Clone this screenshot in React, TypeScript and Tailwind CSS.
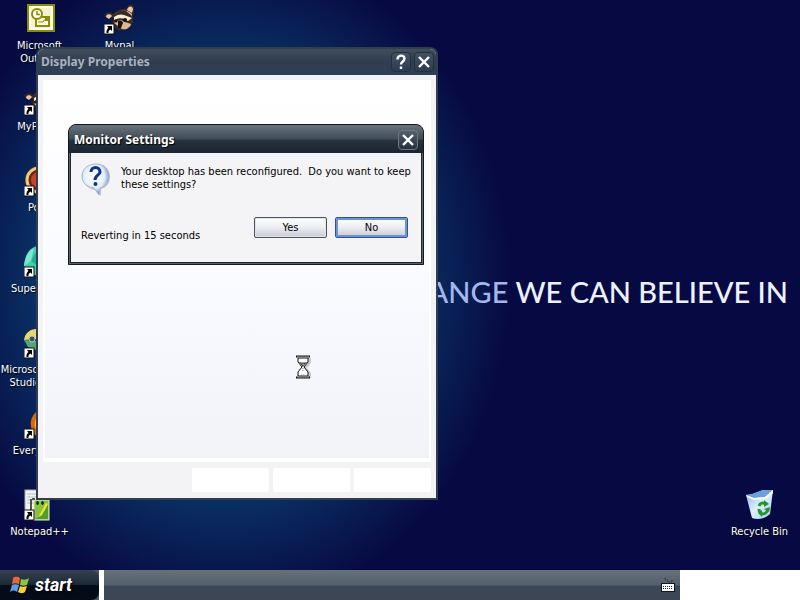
import type { ReactNode } from 'react';

function Shortcut() {
  return (
    <g>
      <rect x="0" y="21" width="10" height="10" fill="#fff" stroke="#111" strokeWidth="1" />
      <path d="M3 23h5v5l-1.600-1.600c-1.500 1-2 2-2 3.600H2.500c-.3-2.400.6-4 2-5z" fill="#000" />
    </g>
  );
}

function Icon({ children }: { children: ReactNode }) {
  return (
    <svg viewBox="0 0 32 32" className="h-8 w-8 shrink-0" aria-hidden="true">
      {children}
    </svg>
  );
}

const outlook = (
  <Icon>
    <rect x="3" y="1" width="28" height="28" fill="#8b8d08" />
    <rect x="5" y="3" width="24" height="24" fill="#fffff0" />
    <rect x="7" y="5" width="20" height="20" fill="#f4f3cf" />
    <rect x="12" y="14" width="13" height="9" fill="#fffff0" stroke="#8b8d08" strokeWidth="2" />
    <path d="M14 19h5l1-2h5" fill="none" stroke="#8b8d08" />
    <circle cx="13" cy="11" r="5" fill="#fffff0" stroke="#8b8d08" strokeWidth="2" />
    <path d="M13 8v3.500h3" fill="none" stroke="#8b8d08" strokeWidth="1.500" />
    <rect x="21" y="15" width="3" height="3" fill="#8b8d08" />
  </Icon>
);

const raccoon = (
  <Icon>
    <path d="M1 14c-1-4 4-6 8-3 4-4 8-5 13-5l3-4c3-1 6 1 5 6l-1 5c1 6-1 10-4 12-4 3-8 3-11 2l-5-4c-1-3-1-5 1-8z" fill="#3b2a22" />
    <path d="M2 14c0-3 4-4 6-1l-3 3zM23 7c1-4 5-5 6-1l-1 4z" fill="#e9c8a8" />
    <path d="M10 12c4-4 8-5 12-4l6 5c0-1 0-2-1-3-5-4-12-3-17 2z" fill="#c9b39c" />
    <path d="M10 14c4-3 7-3 10-2l8 3-4 3c-4-3-8-4-14-1z" fill="#f7ead9" />
    <path d="M10 20c3-3 7-4 11-1l6 2c-1 4-5 6-9 5l-4-3z" fill="#dcb796" />
    <path d="M14 18c2-1 5 0 5 2l-2 5h-3z" fill="#1b1210" />
    <circle cx="21" cy="17" r="2" fill="#120d0c" />
    <circle cx="12" cy="18" r="1.500" fill="#120d0c" />
    <Shortcut />
  </Icon>
);

const disc = (
  <Icon>
    <circle cx="15" cy="15" r="14" fill="#6b2412" />
    <circle cx="15" cy="15" r="12" fill="none" stroke="#e6cd86" strokeWidth="3" />
    <circle cx="15" cy="15" r="8" fill="#c8402a" />
    <Shortcut />
  </Icon>
);

const gem = (
  <Icon>
    <path d="M0 20C1 8 6 1 14 0c8 2 14 9 14 20l-8 9H8z" fill="#3fcfae" />
    <path d="M0 20C1 10 5 4 10 2L7 15z" fill="#7fe6cc" />
    <path d="M7 15l7-13v18z" fill="#23ae94" />
    <Shortcut />
  </Icon>
);

const studio = (
  <Icon>
    <path d="M0 13C1 6 6 2 12 2v10z" fill="#ecd76b" />
    <path d="M12 2c8 0 14 5 15 11l-13 2z" fill="#d9502e" />
    <path d="M0 13l4 7 8 3 2-9z" fill="#55a577" />
    <path d="M14 14l13-1c0 7-6 11-13 11z" fill="#3a6fc0" />
    <circle cx="8" cy="12" r="3" fill="#31517e" stroke="#c7cf8c" strokeWidth="1" />
    <Shortcut />
  </Icon>
);

const flame = (
  <Icon>
    <path d="M14 2C6 9 5 16 9 25c4 5 12 4 15-1 3-8-4-13-10-22z" fill="#d4690f" />
    <path d="M13 9c-4 6-2 13 2 16 3-5 1-10-2-16z" fill="#ffb22e" />
    <Shortcut />
  </Icon>
);

const notepad = (
  <Icon>
    <rect x="1" y="1" width="19" height="26" fill="#f2f3f4" stroke="#a8adb5" />
    <path d="M3 5h15M3 8h15M3 11h15M3 14h15" stroke="#b4bcc6" />
    <rect x="10" y="11" width="15" height="20" fill="#86c440" stroke="#dceccc" />
    <path d="M11 30c6-2 10-8 13-15v15z" fill="#509f28" />
    <path d="M16 25l6-11 2 1-6 11-3 2z" fill="#f2de3b" />
    <path d="M7 10v12M8 10h3M12 14h3M13.500 12v4M17 14h3M18.500 12v4" stroke="#1d2a14" strokeWidth="1.500" />
    <Shortcut />
  </Icon>
);

const bin = (
  <Icon>
    <defs>
      <linearGradient id="bin" x1="0" x2="1" y1="0" y2="1">
        <stop offset="0" stopColor="#7fb5ec" />
        <stop offset=".5" stopColor="#dff0fb" />
        <stop offset="1" stopColor="#9cc9ef" />
      </linearGradient>
    </defs>
    <path d="M2 6l6-1 11-4 10 0-3 24c-5 5-13 6-18 4z" fill="url(#bin)" />
    <path d="M2 6l8 3 11-1 8-7-10 0-10 4z" fill="#6ba0dc" />
    <path d="M2 6l8 3 11-1 8-7v3l-8 6-11 1-7-3z" fill="#f8fcff" />
    <g fill="none" stroke="#25962c" strokeWidth="3">
      <path d="M15 17c1-3 4-4 7-2M24 20c-1 4-3 5-6 5M15 20c0 2 1 4 3 4" />
    </g>
    <path d="M20 11l5 4-5 3zM26 18l-1 5-5-3zM18 21v7l-4-4z" fill="#25962c" />
  </Icon>
);

function DesktopItem({ icon, lines }: { icon: ReactNode; lines: string[] }) {
  return (
    <button
      type="button"
      className="flex h-[81px] w-[79px] shrink-0 flex-col items-center gap-1 pt-[3px] text-center text-[11px] leading-[13px] text-white [text-shadow:1px_1px_1px_#000]"
    >
      {icon}
      <span>
        {lines.map((line) => (
          <span key={line} className="block whitespace-nowrap">
            {line}
          </span>
        ))}
      </span>
    </button>
  );
}

function TitleButton({ label, children, dim }: { label: string; children: ReactNode; dim?: boolean }) {
  return (
    <button
      type="button"
      aria-label={label}
      className={
        dim
          ? 'flex h-5 w-5 items-center justify-center rounded-sm border border-[#222f40] bg-gradient-to-b from-[#445162] to-[#2b3b50]'
          : 'flex h-5 w-5 items-center justify-center rounded-sm border border-[#6c7783] bg-gradient-to-b from-[#56616b] to-[#26323f]'
      }
    >
      <svg viewBox="0 0 16 16" className="h-4 w-4" fill="none" stroke="#fff" strokeWidth="2.400">
        {children}
      </svg>
    </button>
  );
}

const cross = <path d="M3 3l10 10M13 3L3 13" />;

function DisplayProperties() {
  return (
    <section
      aria-label="Display Properties"
      className="absolute top-[47px] left-9 flex h-[453px] w-[402px] flex-col rounded-t-lg border-2 border-[#2f3f50] bg-[#f3f3f6]"
    >
      <header className="flex h-[26px] shrink-0 items-center justify-between rounded-t-md bg-gradient-to-b from-[#424d5b] via-[#303d4f] to-[#2d3f57] pr-[2px] pl-[3px]">
        <h1 className="font-['Noto_Sans'] text-[12px] font-bold text-[#a9b1bd]">Display Properties</h1>
        <div className="flex gap-[3px]">
          <TitleButton label="Help" dim>
            <path d="M4.500 5.500c0-5 7-5 7-1 0 3-3.500 3-3.500 6M8 12.500v2.500" />
          </TitleButton>
          <TitleButton label="Close" dim>
            {cross}
          </TitleButton>
        </div>
      </header>
      <div className="flex grow flex-col px-[5px] pt-[5px]">
        <div className="grow border-2 border-b-4 border-white bg-gradient-to-b from-white via-[#fafbff] to-[#f2f3f9]" />
        <footer className="flex h-9 shrink-0 items-center justify-end gap-1">
          <button type="button" aria-label="OK" className="h-6 w-[77px] rounded-xs bg-white" />
          <button type="button" aria-label="Cancel" className="h-6 w-[77px] rounded-xs bg-white" />
          <button type="button" aria-label="Apply" className="h-6 w-[77px] rounded-xs bg-white" />
        </footer>
      </div>
    </section>
  );
}

function MonitorSettings() {
  return (
    <section
      role="dialog"
      aria-label="Monitor Settings"
      className="absolute top-[124px] left-[68px] flex h-[141px] w-[356px] flex-col rounded-t-lg border border-[#15191f] bg-[#59636d] text-[11px] leading-[13px] text-black"
    >
      <header className="flex h-7 shrink-0 items-center justify-between rounded-t-lg bg-linear-[to_bottom,#69727a_0%,#3f4c56_50%,#26323f_55%,#1b2533_100%] pt-px pr-[5px] pl-[5px]">
        <h2 className="font-['Noto_Sans'] text-[12px] font-bold text-white [text-shadow:1px_1px_1px_#000]">Monitor Settings</h2>
        <TitleButton label="Close">{cross}</TitleButton>
      </header>
      <div className="mx-px mb-px flex grow flex-col border border-t-0 border-[#20262d] bg-[#f4f4f6] pt-[9px] pr-3 pl-[10px]">
        <div className="flex gap-2">
          <svg viewBox="0 0 32 36" className="h-9 w-8 shrink-0" aria-hidden="true">
            <defs>
              <radialGradient id="bubble" cx=".45" cy=".4" r=".6">
                <stop offset="0" stopColor="#fff" />
                <stop offset=".65" stopColor="#e4eefa" />
                <stop offset="1" stopColor="#6387bf" />
              </radialGradient>
            </defs>
            <path d="M16 3c8 0 13 5 13 12 0 6-3 10-9 12v7l-6-6C7 27 2 22 2 15 2 8 8 3 16 3z" fill="#8b9099" opacity=".45" />
            <path d="M15 2c8 0 13 5 13 12 0 6-4 11-9 12l-1 7-5-7C6 25 1 21 1 14 1 7 7 2 15 2z" fill="url(#bubble)" stroke="#a5b6d0" />
            <path d="M10 10c0-6 9-6 9 0 0 3-5 3-5 8" fill="none" stroke="#102f92" strokeWidth="3" />
            <circle cx="14.500" cy="22" r="2" fill="#102f92" />
          </svg>
          <p className="pt-[3px] whitespace-pre">{'Your desktop has been reconfigured.  Do you want to keep\nthese settings?'}</p>
        </div>
        <div className="mt-[19px] flex items-start justify-between pr-px">
          <p className="pt-3">Reverting in 15 seconds</p>
          <div className="flex gap-2">
            <button
              type="button"
              className="h-[21px] w-[73px] rounded-[2px] border border-[#4b535e] bg-linear-[to_bottom,#fff,#eef0f4_45%,#c7cbd3] shadow-[inset_0_0_0_1px_#e1e4e9]"
            >
              Yes
            </button>
            <button
              type="button"
              className="h-[21px] w-[73px] rounded-[2px] border border-[#335190] bg-linear-[to_bottom,#fff,#eef0f4_45%,#c7cbd3] shadow-[inset_0_0_0_2px_#6d94d2]"
            >
              No
            </button>
          </div>
        </div>
      </div>
    </section>
  );
}

function Hourglass() {
  return (
    <svg viewBox="0 0 18 24" className="absolute top-[355px] left-[295px] h-6 w-[18px]" aria-label="Busy">
      <path d="M4 3h12v5l-4 5 4 5v5H5v-4l5-6-6-6z" fill="#9da0a8" opacity=".5" />
      <path d="M3 3h10v4l-4 5 4 5v4H3v-4l4-5-4-5z" fill="#fff" stroke="#111" />
      <path d="M1 1.500h14M1 22.500h14" stroke="#111" strokeWidth="2" />
      <path d="M2 2h12M2 22h12" stroke="#aaa" strokeWidth="1" />
      <path d="M4 7h8L8 12z" fill="#333" />
      <path d="M5 7h1v1h1V7h1v1h1V7h1v1h1M7 9h1v1h1V9" fill="none" stroke="#ddd" strokeWidth=".6" />
      <path d="M8 13v4M6 20h4" stroke="#888" strokeDasharray="1 1" />
    </svg>
  );
}

function Taskbar() {
  return (
    <footer className="flex h-[30px] shrink-0 bg-white">
      <div className="flex w-[99px] shrink-0 bg-[#4a5560]">
        <button
          type="button"
          className="flex w-full items-center gap-1 rounded-r-lg bg-linear-[to_bottom,#35414e_0%,#1c2a38_48%,#030b18_52%,#050b17_100%] pl-[9px]"
        >
          <svg viewBox="0 0 22 22" className="h-[22px] w-[22px]" aria-hidden="true">
            <path d="M4 4c3-2 5-1 7 0l-1 6c-3-1-5-1-7 0z" fill="#e8663a" />
            <path d="M12 5c3 1 5 1 8-1l-2 7c-2 1-5 1-7 0z" fill="#8ac63f" />
            <path d="M3 11c2-1 4-1 7 0l-2 7c-2-2-4-2-7 0z" fill="#5f9be6" />
            <path d="M11 12c2 1 4 1 7 0l-2 6c-3 2-5 1-7 0z" fill="#f7cf3a" />
          </svg>
          <span className="font-[Roboto] text-[18px] leading-6 font-bold text-white italic [text-shadow:1px_1px_2px_#000]">start</span>
        </button>
      </div>
      <div className="ml-[5px] flex grow items-center justify-end bg-linear-[to_bottom,#67717b_0%,#535f6b_50%,#3b4757_54%,#3b4554_100%] pr-[5px]">
        <svg viewBox="0 0 14 16" className="h-4 w-[14px]" aria-label="Keyboard">
          <path d="M4 1v2h3v2h4V3" fill="none" stroke="#1e2730" strokeDasharray="1 1" />
          <rect x="0" y="6" width="14" height="9" fill="#111820" />
          <rect x="1" y="7" width="12" height="7" fill="#fff" />
          <path d="M2 9.500h10M2 11.500h10" stroke="#222b35" strokeDasharray="1 1" />
        </svg>
      </div>
      <div className="w-[15%] shrink-0" />
    </footer>
  );
}

export default function App() {
  return (
    <div className="flex min-h-screen flex-col bg-[#070a42] font-['DejaVu_Sans_Condensed','DejaVu_Sans',sans-serif]">
      <main className="relative flex grow items-stretch justify-between overflow-hidden bg-[radial-gradient(ellipse_285px_330px_at_225px_280px,#0d578e_0%,#0b447a_50%,#09265a_75%,#070a42_100%)]">
        <div className="flex gap-px">
          <div className="flex flex-col">
            <DesktopItem icon={outlook} lines={['Microsoft', 'Outlook']} />
            <DesktopItem icon={raccoon} lines={['MyPal 68']} />
            <DesktopItem icon={disc} lines={['Poke']} />
            <DesktopItem icon={gem} lines={['Supermium']} />
            <DesktopItem icon={studio} lines={['Microsoft Visual', 'Studio 2010']} />
            <DesktopItem icon={flame} lines={['Everything']} />
            <DesktopItem icon={notepad} lines={['Notepad++']} />
          </div>
          <DesktopItem icon={raccoon} lines={['Mypal']} />
        </div>
        <p className="absolute top-[274px] right-3 font-[Lato] text-[29px] leading-9 font-medium whitespace-nowrap text-[#edf1ff]">
          <span className="text-[#a3b7ee]">CHANGE</span> WE CAN BELIEVE IN
        </p>
        <div className="flex flex-col justify-end pr-px pb-[3px]">
          <DesktopItem icon={bin} lines={['Recycle Bin']} />
        </div>
        <DisplayProperties />
        <MonitorSettings />
        <Hourglass />
      </main>
      <Taskbar />
    </div>
  );
}
